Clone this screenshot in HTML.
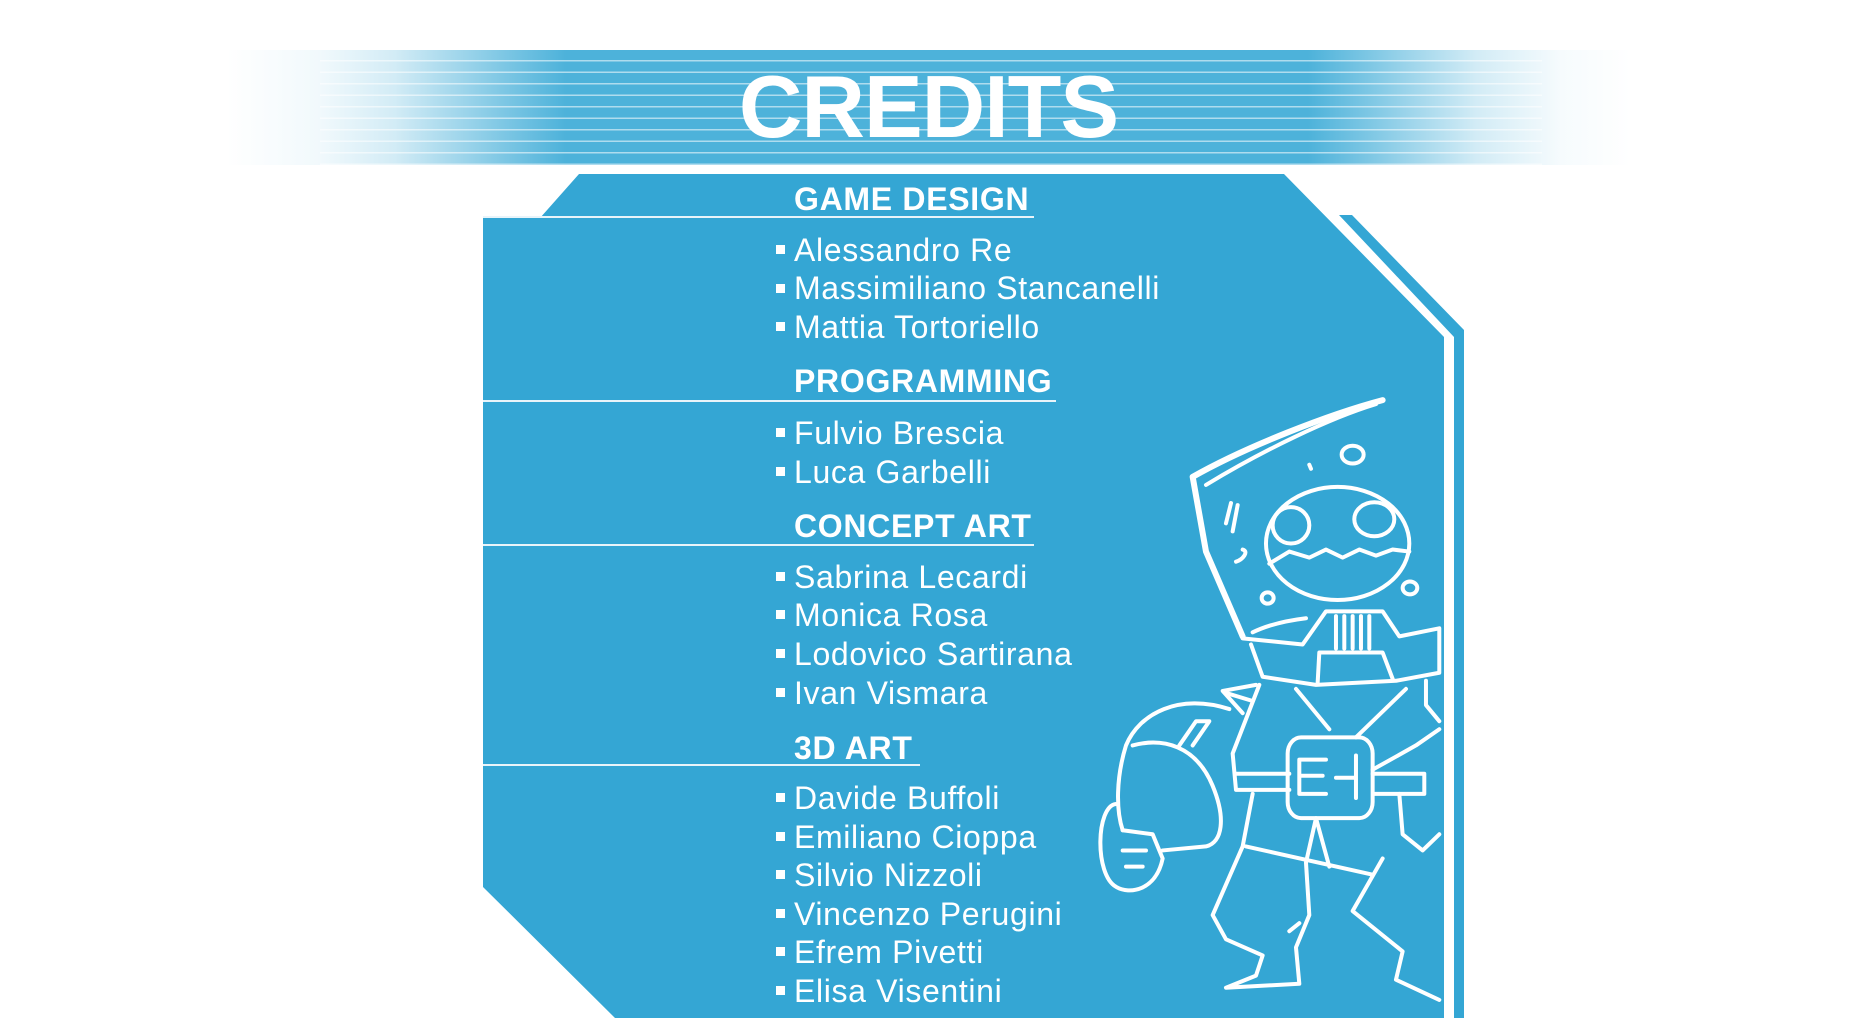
<!DOCTYPE html>
<html><head><meta charset="utf-8"><style>
html,body{margin:0;padding:0;background:#fff;}
body{width:1857px;height:1025px;position:relative;overflow:hidden;font-family:"Liberation Sans",Arial,sans-serif;color:#fff;}
.band{position:absolute;left:226px;top:50px;width:1405px;height:115px;
background:linear-gradient(to right,rgba(77,178,218,0) 0%,rgba(77,178,218,0.08) 6.7%,rgba(77,178,218,0.25) 12%,#4db2da 24.2%,#4db2da 77%,rgba(77,178,218,0.25) 89%,rgba(77,178,218,0.05) 95%,rgba(77,178,218,0) 100%);}
.lines{position:absolute;left:320px;top:50px;width:1222px;height:115px;
background:repeating-linear-gradient(to bottom,transparent 0,transparent 10px,rgba(255,255,255,0.55) 10px,rgba(255,255,255,0.55) 11.5px);}
.title{position:absolute;left:0;width:1857px;text-align:center;top:63px;font-size:88px;font-weight:bold;line-height:88px;letter-spacing:-1px;}
.t{position:absolute;line-height:1;white-space:nowrap;}
.h{font-size:32px;font-weight:bold;left:794px;letter-spacing:0.7px;}
.n{font-size:32px;left:794px;letter-spacing:0.65px;}
.b{position:absolute;left:776px;width:9px;height:9px;background:#fff;}
.u{position:absolute;left:483px;height:2px;background:#e8f4fa;}
</style></head><body>
<div class="band"></div>
<div class="lines"></div>
<div class="title">CREDITS</div>
<svg width="1857" height="1025" style="position:absolute;left:0;top:0">
<polygon points="540,218 579,174 1284,174 1444,337 1444,1018 615,1018 483,887 483,218" fill="#34a6d4"/>
<polygon points="1339,215 1352,215 1464,330 1464,1018 1454,1018 1454,337" fill="#34a6d4"/>
<g transform="translate(1096,390) scale(0.3333,0.4039)" fill="none" stroke="#fff" stroke-width="4" stroke-linecap="round" stroke-linejoin="round">
<path vector-effect="non-scaling-stroke" d="M860 25 C700 60 450 140 290 215 L330 400 L440 610" stroke-width="6"/>
<path vector-effect="non-scaling-stroke" d="M330 235 C500 150 700 70 840 35"/>
<ellipse vector-effect="non-scaling-stroke" cx="725" cy="380" rx="215" ry="140"/>
<ellipse vector-effect="non-scaling-stroke" cx="585" cy="335" rx="55" ry="45"/>
<ellipse vector-effect="non-scaling-stroke" cx="835" cy="320" rx="60" ry="42"/>
<path vector-effect="non-scaling-stroke" d="M520 430 L580 400 L640 415 L690 395 L740 415 L790 395 L840 410 L890 395 L940 400"/>
<ellipse vector-effect="non-scaling-stroke" cx="770" cy="160" rx="33" ry="22"/>
<ellipse vector-effect="non-scaling-stroke" cx="515" cy="515" rx="18" ry="14"/>
<ellipse vector-effect="non-scaling-stroke" cx="942" cy="490" rx="22" ry="16"/>
<path vector-effect="non-scaling-stroke" d="M420 425 C440 420 460 400 440 395 M390 330 L405 280 M410 350 L425 285 M640 185 L645 195"/>
<path vector-effect="non-scaling-stroke" d="M470 600 C520 580 580 570 630 565 M440 615 L620 630 L690 548 L860 548 L910 610 L1030 590 L1030 700 L900 720 L660 730 L500 710 L465 630"/>
<path vector-effect="non-scaling-stroke" d="M665 725 L670 650 L860 650 L890 715 M720 560 L720 640 M745 560 L745 640 M770 560 L770 640 M795 560 L795 640 M820 560 L820 640"/>
<path vector-effect="non-scaling-stroke" d="M490 730 L410 900 L420 990 L580 990 M420 950 L580 950 M830 950 L985 950 L985 1000 L835 1000 M990 720 L990 780 L1030 820 M600 740 L700 840 M930 740 L780 860 M1030 840 L960 880 L830 940"/>
<rect vector-effect="non-scaling-stroke" x="575" y="860" width="255" height="200" rx="40"/>
<path vector-effect="non-scaling-stroke" d="M690 915 L610 915 L610 1000 L690 1000 M610 955 L680 955 M780 905 L780 1010 M720 960 L780 960"/>
<path vector-effect="non-scaling-stroke" d="M480 730 L380 745 L440 800 M390 750 L470 770 M400 790 C250 750 130 800 90 880 C60 960 60 1040 80 1090"/>
<path vector-effect="non-scaling-stroke" d="M110 880 C200 860 300 880 350 980 C390 1060 380 1120 330 1130 L200 1140 M250 880 L300 820 L340 820 L290 880"/>
<path vector-effect="non-scaling-stroke" d="M60 1025 C0 1030 -5 1200 60 1230 C100 1250 180 1240 200 1160 L170 1100 L80 1090 M80 1140 L150 1140 M90 1180 L140 1180"/>
<path vector-effect="non-scaling-stroke" d="M470 1000 L440 1130 L350 1300 L390 1360 L500 1400 L480 1450 L390 1480 L610 1470 L600 1380 L640 1300 L630 1170 L660 1060 L700 1180 M450 1130 L830 1200 M860 1160 L770 1290 L920 1390 L900 1460 L1030 1510 M910 1000 L920 1100 L980 1140 L1030 1100 M580 1340 L610 1320"/>
</g>
</svg>
<div class="u" style="top:216px;width:551px"></div>
<div class="u" style="top:400px;width:573px"></div>
<div class="u" style="top:544px;width:551px"></div>
<div class="u" style="top:764px;width:437px"></div>
<div class="t h" style="top:183px">GAME DESIGN</div>
<div class="t h" style="top:365px">PROGRAMMING</div>
<div class="t h" style="top:510px">CONCEPT ART</div>
<div class="t h" style="top:732px">3D ART</div>

<div class="b" style="top:245px"></div><div class="t n" style="top:234px">Alessandro Re</div>
<div class="b" style="top:284px"></div><div class="t n" style="top:272px">Massimiliano Stancanelli</div>
<div class="b" style="top:322px"></div><div class="t n" style="top:311px">Mattia Tortoriello</div>
<div class="b" style="top:428px"></div><div class="t n" style="top:417px">Fulvio Brescia</div>
<div class="b" style="top:467px"></div><div class="t n" style="top:456px">Luca Garbelli</div>
<div class="b" style="top:572px"></div><div class="t n" style="top:561px">Sabrina Lecardi</div>
<div class="b" style="top:610px"></div><div class="t n" style="top:599px">Monica Rosa</div>
<div class="b" style="top:649px"></div><div class="t n" style="top:638px">Lodovico Sartirana</div>
<div class="b" style="top:688px"></div><div class="t n" style="top:677px">Ivan Vismara</div>
<div class="b" style="top:793px"></div><div class="t n" style="top:782px">Davide Buffoli</div>
<div class="b" style="top:832px"></div><div class="t n" style="top:821px">Emiliano Cioppa</div>
<div class="b" style="top:870px"></div><div class="t n" style="top:859px">Silvio Nizzoli</div>
<div class="b" style="top:909px"></div><div class="t n" style="top:898px">Vincenzo Perugini</div>
<div class="b" style="top:947px"></div><div class="t n" style="top:936px">Efrem Pivetti</div>
<div class="b" style="top:986px"></div><div class="t n" style="top:975px">Elisa Visentini</div>
</body></html>
